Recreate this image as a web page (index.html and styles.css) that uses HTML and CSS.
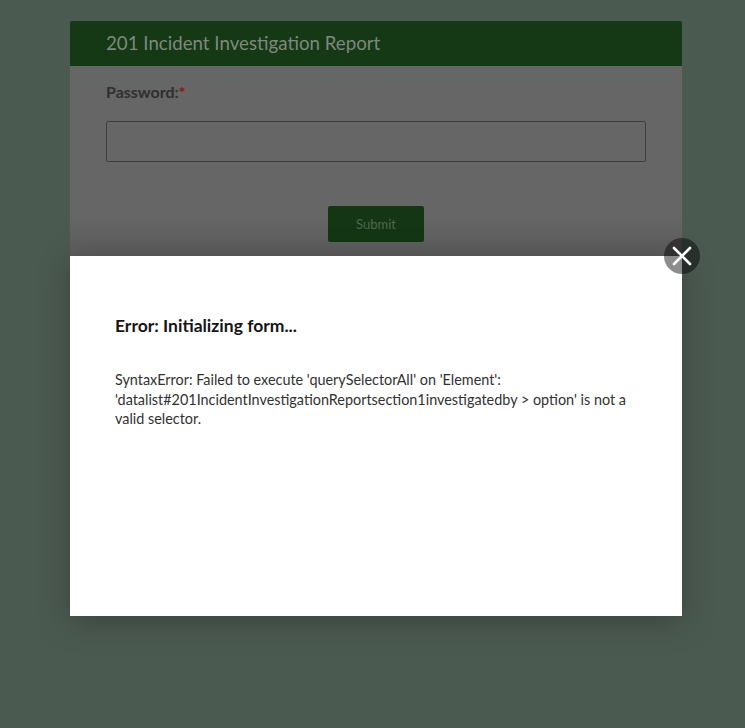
FILE: index.html
```html
<!DOCTYPE html>
<html>
<head>
<meta charset="utf-8">
<link rel="stylesheet" href="styles.css">
</head>
<body>
<div class="card">
  <div class="card-header">201 Incident Investigation Report</div>
  <div class="card-body">
    <div class="label">Password:<span class="req">*</span></div>
    <div class="input"></div>
    <div class="actions"><div class="btn">Submit</div></div>
  </div>
</div>
<div class="modal">
  <h2 class="modal-title">Error: Initializing form...</h2>
  <p class="modal-text">SyntaxError: Failed to execute 'querySelectorAll' on 'Element': 'datalist#201IncidentInvestigationReportsection1investigatedby &gt; option' is not a valid selector.</p>
  <div class="close">
    <svg width="20" height="20" viewBox="0 0 20 20"><path d="M2 2 L18 18 M18 2 L2 18" stroke="#fff" stroke-width="2.6" stroke-linecap="round"/></svg>
  </div>
</div>
</body>
</html>
```
FILE: styles.css
```css
html, body {
  margin: 0;
  padding: 0;
  height: 100%;
}
body {
  background: #4b5a51;
  font-family: Lato, "Open Sans", "Liberation Sans", sans-serif;
  overflow: hidden;
}
.card {
  width: 612px;
  margin: 21px 0 0 70px;
  border-radius: 2px 2px 0 0;
  overflow: hidden;
}
.card-header {
  background: #153815;
  height: 45px;
  box-sizing: border-box;
  padding: 10px 36px 0;
  color: #7d897e;
  font-size: 18.7px;
  line-height: 24px;
}
.card-body {
  background: linear-gradient(to bottom, #666 0, #666 150px, #5c5c5c 190px);
  height: 190px;
  box-sizing: border-box;
  padding: 16px 36px 0;
}
.label {
  font-weight: bold;
  font-size: 16px;
  color: #2f2f2f;
  line-height: 20px;
}
.req {
  color: #8b1616;
}
.input {
  margin-top: 19px;
  height: 41px;
  box-sizing: border-box;
  border: 1px solid #3f3f3f;
  border-radius: 2px;
}
.actions {
  display: flex;
  justify-content: center;
  margin-top: 44px;
}
.btn {
  width: 96px;
  height: 36px;
  background: #143614;
  border-radius: 2px;
  color: #50674f;
  font-size: 13px;
  line-height: 36px;
  text-align: center;
}
.modal {
  position: absolute;
  left: 70px;
  top: 256px;
  width: 612px;
  height: 360px;
  box-sizing: border-box;
  background: #fff;
  padding: 59px 45px 0;
  box-shadow: 0 5px 30px rgba(0, 0, 0, 0.25);
}
.modal-title {
  margin: 0;
  font-size: 17.5px;
  font-weight: bold;
  color: #151515;
  line-height: 22px;
}
.modal-text {
  margin: 33px 0 0;
  font-size: 14.4px;
  line-height: 19.5px;
  color: #323232;
}
.close {
  position: absolute;
  right: -18px;
  top: -18px;
  width: 36px;
  height: 36px;
  border-radius: 50%;
  background: rgba(0, 0, 0, 0.45);
  display: flex;
  align-items: center;
  justify-content: center;
}
```
